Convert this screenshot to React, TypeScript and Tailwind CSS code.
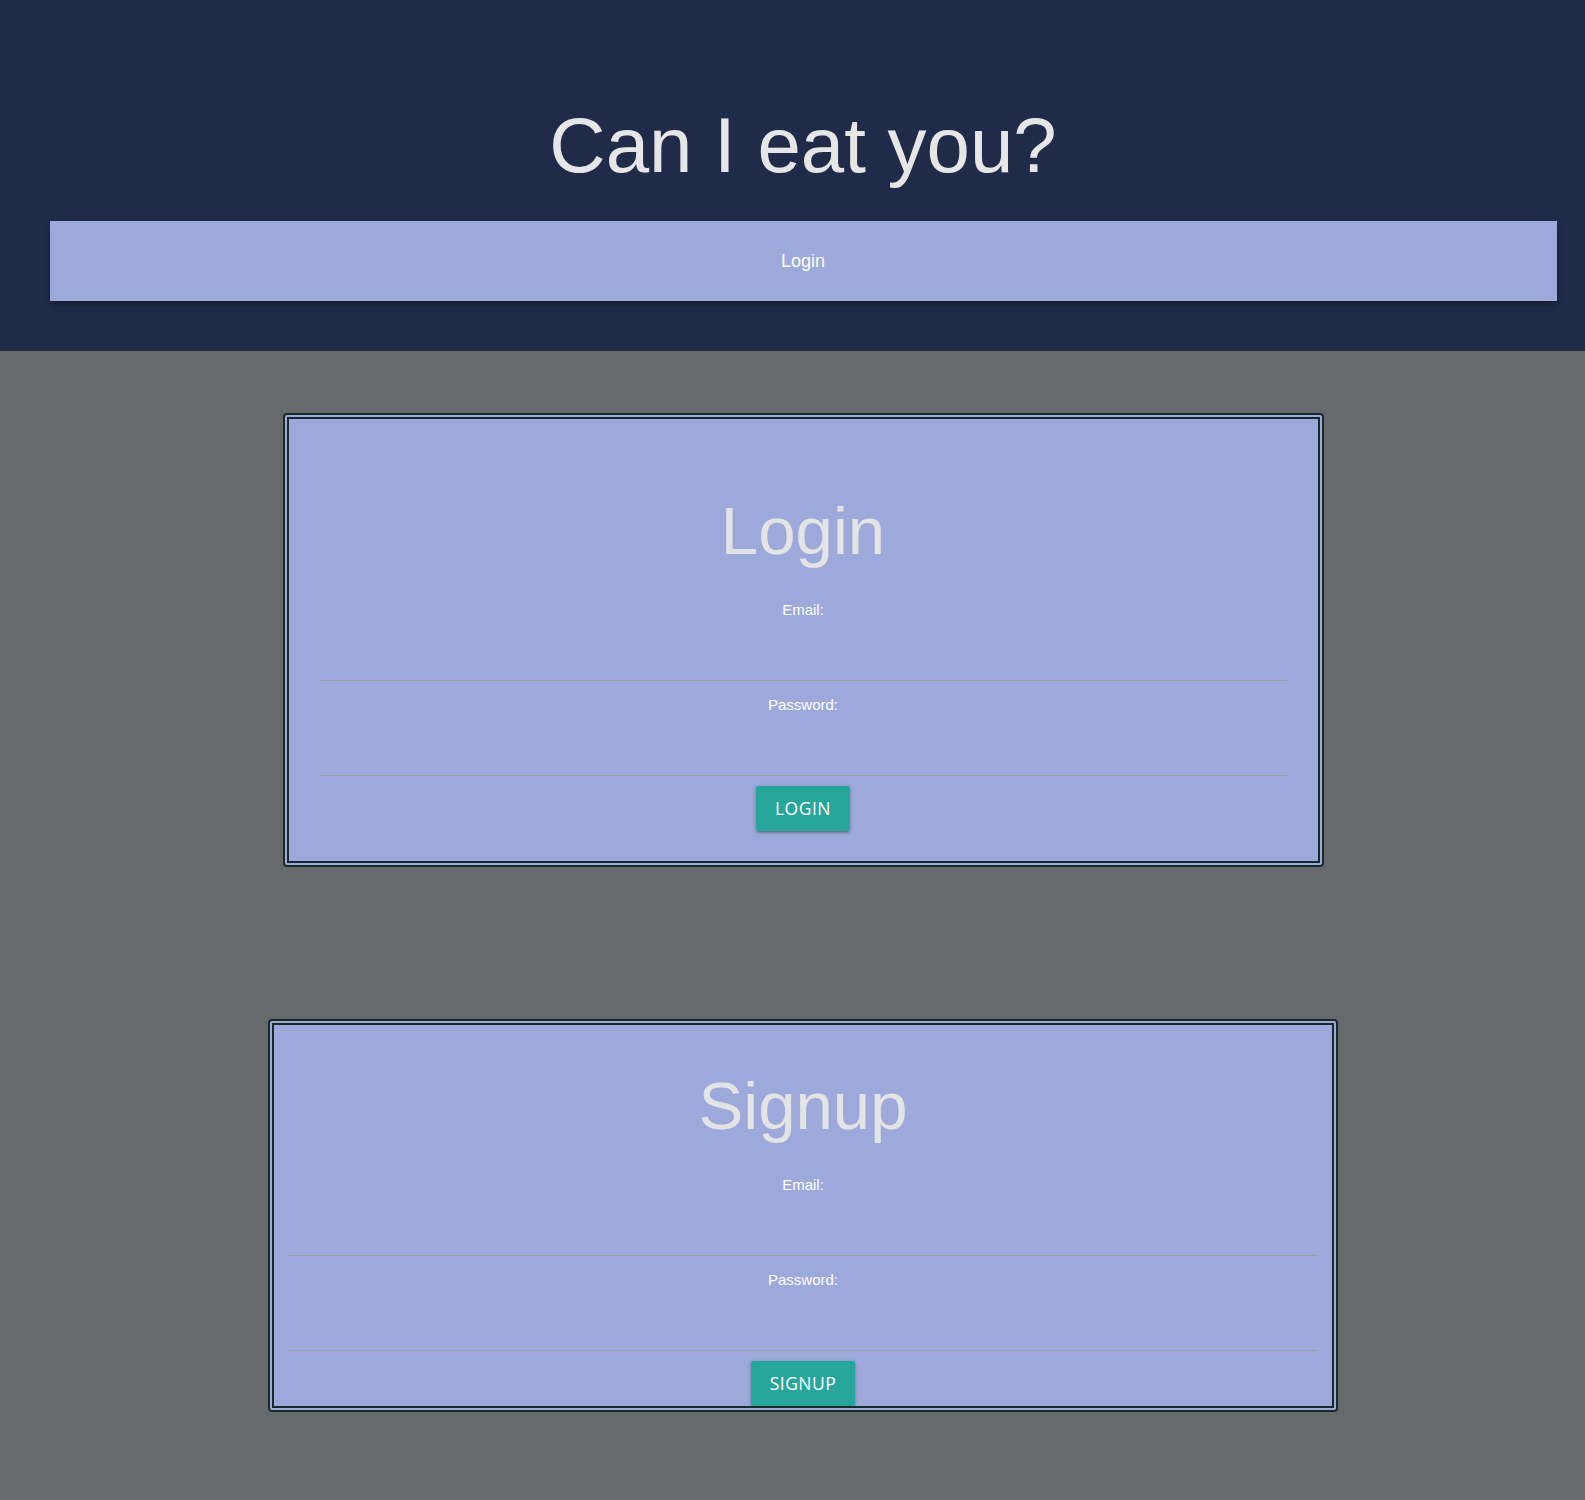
import React from "react";

function Field({ label }: { label: string }) {
	return (
		<div className="flex flex-col">
			<label className="h-[17px] text-[15px] leading-[17px] text-white text-center">{label}</label>
			<input type="text" className="h-[63px] w-full bg-transparent border-0 border-b border-solid border-[#9e9e9e] outline-none" />
		</div>
	);
}

function AuthCard({ title, action, outer, inner }: { title: string; action: string; outer: string; inner: string }) {
	return (
		<div className={`bg-[#9ea9db] border-[6px] border-double border-[#172a2a] rounded-[4px] overflow-hidden ${outer}`}>
			<form className={`flex flex-col ${inner}`} onSubmit={e => e.preventDefault()}>
				<h1 className="text-[67.2px] leading-[74px] text-[#e4e4e4] text-center">{title}</h1>
				<div className="mt-[33px]">
					<Field label="Email:" />
				</div>
				<div className="mt-[15px]">
					<Field label="Password:" />
				</div>
				<div className="flex justify-center mt-[10px]">
					<button
						type="submit"
						className="h-[45px] px-[19px] bg-[#26a69a] text-white rounded-[2px] tracking-[0.5px] text-[17.5px] shadow-[0_2px_2px_0_rgba(0,0,0,0.14),0_3px_1px_-2px_rgba(0,0,0,0.12),0_1px_5px_0_rgba(0,0,0,0.2)]"
						style={{ fontFamily: '"Open Sans", sans-serif' }}
					>
						{action}
					</button>
				</div>
			</form>
		</div>
	);
}

export default function App() {
	return (
		<div className="min-h-screen bg-[#666a6d]" style={{ fontFamily: '"Liberation Sans", Arial, sans-serif' }}>
			{/* header */}
			<header className="bg-[#1f2b48] pt-[99px] pb-[50px] pl-[21px]">
				<h1 className="text-[78px] leading-[92px] text-[#e6e6e6] text-center">Can I eat you?</h1>
				<nav className="mt-[30px] mx-auto w-[1507px] h-[80px] bg-[#9ea9db] flex items-center justify-center shadow-[0_4px_6px_rgba(0,0,0,0.3)]">
					<a className="text-[18px] text-white">Login</a>
				</nav>
			</header>
			{/* forms */}
			<main className="pl-[21px] pt-[62px] pb-[88px] flex flex-col items-center">
				<AuthCard title="Login" action="LOGIN" outer="w-[1041px]" inner="pt-[75px] px-[30px] pb-[30px]" />
				<div className="mt-[152px]">
					<AuthCard title="Signup" action="SIGNUP" outer="w-[1070px] h-[393px]" inner="pt-[44px] px-[14px]" />
				</div>
			</main>
		</div>
	);
}
